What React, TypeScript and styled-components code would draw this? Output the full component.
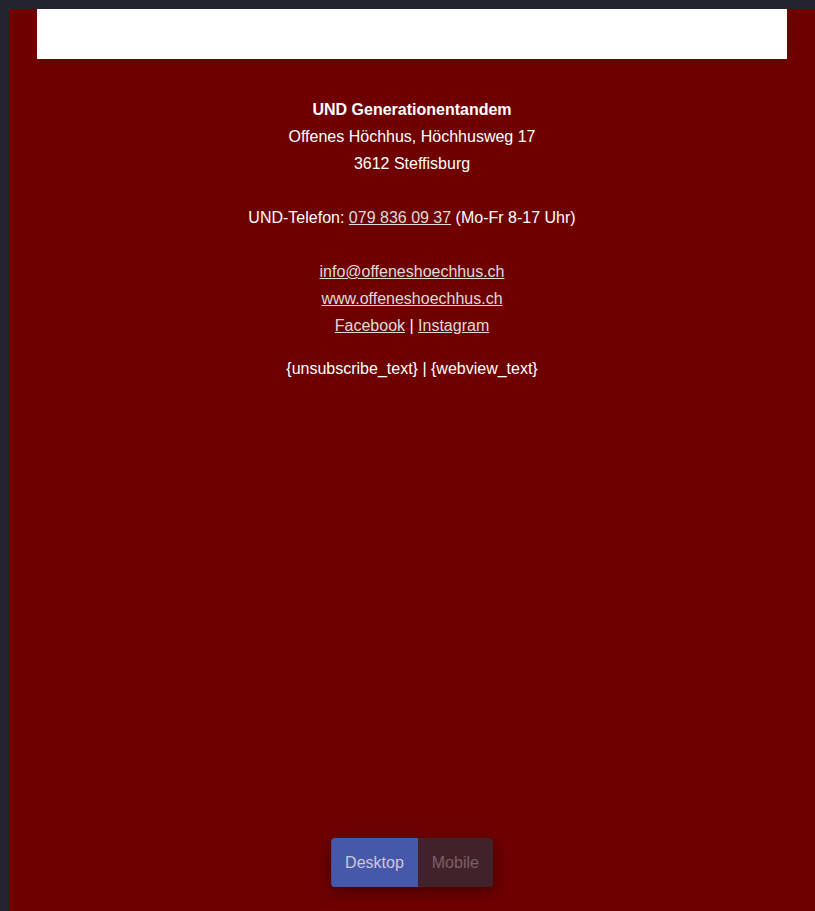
import React from "react";
import styled, { createGlobalStyle } from "styled-components";

const Global = createGlobalStyle`
  html, body { margin: 0; padding: 0; height: 100%; background: #23242e; }
  #root { height: 100%; }
`;

const Shell = styled.div`
  box-sizing: border-box;
  height: 911px;
  padding: 9px 0 0 9px;
  background: #23242e;
  overflow: hidden;
`;

const Canvas = styled.div`
  position: relative;
  height: 100%;
  background: #6e0000;
  padding: 0 28px;
  box-sizing: border-box;
  font-family: "Liberation Sans", Arial, sans-serif;
`;

const Banner = styled.div`
  height: 50px;
  background: #ffffff;
`;

const Footer = styled.footer`
  padding-top: 37px;
  text-align: center;
  color: #ffffff;
  font-size: 16px;
  line-height: 27px;
`;

const Para = styled.p<{ $gap?: number }>`
  margin: ${(p) => p.$gap ?? 0}px 0 0;
`;

const Strong = styled.strong`
  font-weight: 700;
`;

const Link = styled.a`
  color: #dcdcdc;
  text-decoration: underline;
`;

const Toggle = styled.div`
  position: absolute;
  left: 50%;
  bottom: 24px;
  transform: translateX(-50%);
  display: flex;
  border-radius: 4px;
  overflow: hidden;
  box-shadow: 0 4px 14px rgba(0, 0, 0, 0.35);
`;

const ToggleButton = styled.button<{ $active?: boolean }>`
  border: none;
  margin: 0;
  height: 49px;
  padding: 0 14px;
  font-family: "Liberation Sans", Arial, sans-serif;
  font-size: 16px;
  background: ${(p) => (p.$active ? "#4658aa" : "#41222a")};
  color: ${(p) => (p.$active ? "#d2c6da" : "#7d5e66")};
  cursor: pointer;
`;

export default function App() {
  return (
    <>
      <Global />
      <Shell>
        <Canvas>
          <Banner />
          <Footer>
            <Para>
              <Strong>UND Generationentandem</Strong>
              <br />
              Offenes Höchhus, Höchhusweg 17
              <br />
              3612 Steffisburg
              <br />
              <br />
              UND-Telefon: <Link href="#">079 836 09 37</Link> (Mo-Fr 8-17 Uhr)
              <br />
              <br />
              <Link href="#">info@offeneshoechhus.ch</Link>
              <br />
              <Link href="#">www.offeneshoechhus.ch</Link>
              <br />
              <Link href="#">Facebook</Link> | <Link href="#">Instagram</Link>
            </Para>
            <Para $gap={16}>{"{unsubscribe_text} | {webview_text}"}</Para>
          </Footer>
          <Toggle>
            <ToggleButton $active>Desktop</ToggleButton>
            <ToggleButton>Mobile</ToggleButton>
          </Toggle>
        </Canvas>
      </Shell>
    </>
  );
}
